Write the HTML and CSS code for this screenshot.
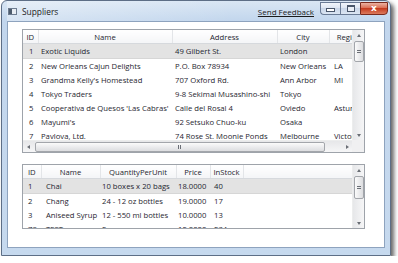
FILE: index.html
```html
<!DOCTYPE html>
<html lang="en">
<head>
    <meta charset="UTF-8">
    <title>Suppliers</title>
    <link rel="stylesheet" href="styles.css">
</head>
<body>
    <div class="window">
        <div class="titlebar">
            <span class="app-icon"><span></span></span>
            <span class="title">Suppliers</span>
            <a class="feedback">Send Feedback</a>
            <div class="caption-buttons">
                <span class="cap-btn min"><span class="glyph-min"></span></span>
                <span class="cap-btn max"><span class="glyph-max"></span></span>
                <span class="cap-btn close">x</span>
            </div>
        </div>

        <div class="client">
            <!-- suppliers grid -->
            <div class="grid grid-top">
                <div class="grid-data">
                    <table class="sup">
                        <colgroup>
                            <col class="c-id"><col class="c-name"><col class="c-addr"><col class="c-city"><col class="c-region">
                        </colgroup>
                        <tr class="head"><th>ID</th><th>Name</th><th>Address</th><th>City</th><th>Region</th></tr>
                        <tr class="selected"><td>1</td><td>Exotic Liquids</td><td>49 Gilbert St.</td><td>London</td><td></td></tr>
                        <tr><td>2</td><td>New Orleans Cajun Delights</td><td>P.O. Box 78934</td><td>New Orleans</td><td>LA</td></tr>
                        <tr><td>3</td><td>Grandma Kelly's Homestead</td><td>707 Oxford Rd.</td><td>Ann Arbor</td><td>MI</td></tr>
                        <tr><td>4</td><td>Tokyo Traders</td><td>9-8 Sekimai Musashino-shi</td><td>Tokyo</td><td></td></tr>
                        <tr><td>5</td><td>Cooperativa de Quesos 'Las Cabras'</td><td>Calle del Rosal 4</td><td>Oviedo</td><td>Asturias</td></tr>
                        <tr><td>6</td><td>Mayumi's</td><td>92 Setsuko Chuo-ku</td><td>Osaka</td><td></td></tr>
                        <tr><td>7</td><td>Pavlova, Ltd.</td><td>74 Rose St. Moonie Ponds</td><td>Melbourne</td><td>Victoria</td></tr>
                    </table>
                </div>
                <div class="vscroll">
                    <span class="btn"><span class="tri up"></span></span>
                    <span class="thumb v-thumb-top"><span class="grip"></span></span>
                    <span class="spacer"></span>
                    <span class="btn"><span class="tri down"></span></span>
                </div>
                <div class="hscroll">
                    <span class="btn"><span class="tri left"></span></span>
                    <span class="thumb h-thumb"><span class="grip"></span></span>
                    <span class="btn"><span class="tri right"></span></span>
                </div>
                <div class="corner"></div>
            </div>

            <!-- products grid -->
            <div class="grid grid-bottom">
                <div class="grid-data">
                    <table class="prod">
                        <colgroup>
                            <col class="p-id"><col class="p-name"><col class="p-qty"><col class="p-price"><col class="p-stock"><col>
                        </colgroup>
                        <tr class="head"><th>ID</th><th>Name</th><th>QuantityPerUnit</th><th>Price</th><th>InStock</th><th class="filler"></th></tr>
                        <tr class="selected"><td>1</td><td>Chai</td><td>10 boxes x 20 bags</td><td>18.0000</td><td>40</td><td></td></tr>
                        <tr><td>2</td><td>Chang</td><td>24 - 12 oz bottles</td><td>19.0000</td><td>17</td><td></td></tr>
                        <tr><td>3</td><td>Aniseed Syrup</td><td>12 - 550 ml bottles</td><td>10.0000</td><td>13</td><td></td></tr>
                        <tr><td>78</td><td>TEST</td><td>2</td><td>12.0000</td><td>234</td><td></td></tr>
                    </table>
                </div>
                <div class="vscroll">
                    <span class="btn"><span class="tri up"></span></span>
                    <span class="thumb v-thumb-bottom"><span class="grip"></span></span>
                    <span class="spacer"></span>
                    <span class="btn"><span class="tri down"></span></span>
                </div>
            </div>
        </div>
    </div>
</body>
</html>
```

FILE: styles.css
```css
body {
    margin: 0;
    background: #fff;
    font-family: "Open Sans", "Liberation Sans", sans-serif;
    color: #222;
}
.window {
    margin-left: 1px;
    width: 390px;
    height: 256px;
    box-sizing: border-box;
    border: 1px solid #5d6e86;
    border-radius: 6px 6px 0 0;
    background: linear-gradient(#d9e6f4, #c2d6ed 20px, #c6d9ee);
    box-shadow: 3px 3px 4px rgba(0, 0, 0, 0.6);
    padding: 0 5px 7px 5px;
    display: flex;
    flex-direction: column;
}
.titlebar {
    height: 20px;
    display: flex;
    align-items: center;
    background: linear-gradient(to right, rgba(255,255,255,0.35), rgba(255,255,255,0) 60%);
}
.app-icon {
    width: 7px;
    height: 5px;
    border: 1px solid #6d7c90;
    background: #e8edf3;
    margin: 1px 5px 0 1px;
    display: flex;
}
.app-icon span {
    width: 3px;
    background: #4d5b6c;
}
.title {
    font-size: 8.4px;
    color: #1b1b1b;
    flex: 1;
}
.feedback {
    font-size: 8px;
    color: #1b1b1b;
    text-decoration: underline;
    margin-right: 6px;
}
.caption-buttons {
    align-self: flex-start;
    margin-top: 1px;
    margin-right: -3px;
    display: flex;
}
.cap-btn {
    height: 13px;
    box-sizing: border-box;
    border: 1px solid #6a7b95;
    display: flex;
    align-items: center;
    justify-content: center;
}
.min, .max {
    width: 20px;
    background: linear-gradient(#f1f5fb, #dbe4f1 50%, #c9d6e8 50%, #dce6f3);
}
.min {
    border-radius: 0 0 0 4px;
    border-right: none;
}
.max {
    border-right: none;
}
.glyph-min {
    width: 7px;
    height: 2px;
    background: #fff;
    border: 1px solid #49566a;
    margin-top: 3px;
}
.glyph-max {
    width: 6px;
    height: 4px;
    border: 1px solid #49566a;
    border-top-width: 2px;
    background: #e9eef5;
}
.close {
    width: 28px;
    border-radius: 0 0 4px 0;
    border-color: #7a2a1d;
    background: linear-gradient(#eab2a2, #d9664b 50%, #c53c20 50%, #dc7a5c);
    color: #fff;
    font-family: "DejaVu Sans", sans-serif;
    font-size: 9px;
    font-weight: bold;
    line-height: 1;
}
.client {
    flex: 1;
    background: #fff;
    border: 1px solid #8ea3be;
    padding: 7px 19px 18px 14px;
    display: flex;
    flex-direction: column;
    gap: 11px;
    min-height: 0;
}
.grid {
    border: 1px solid #9ea3aa;
    display: grid;
    grid-template-columns: 1fr 12px;
    overflow: hidden;
}
.grid-top {
    height: 124px;
    box-sizing: border-box;
    grid-template-rows: 1fr 12px;
}
.grid-bottom {
    flex: 1;
    min-height: 0;
    grid-template-rows: 1fr;
}
.grid-data {
    overflow: hidden;
    min-width: 0;
    min-height: 0;
}
table {
    border-collapse: collapse;
    table-layout: fixed;
    font-size: 7.7px;
    white-space: nowrap;
    color: #1f2630;
}
.sup { width: 346px; }
.prod { width: 329px; }
.c-id { width: 15px; }
.c-name { width: 134px; }
.c-addr { width: 105px; }
.c-city { width: 52px; }
.c-region { width: 40px; }
.p-id { width: 18px; }
.p-name { width: 59px; }
.p-qty { width: 76px; }
.p-price { width: 34px; }
.p-stock { width: 33px; }
th, td {
    overflow: hidden;
    padding: 0 0 0 3px;
}
th {
    height: 13px;
    font-weight: normal;
    text-align: center;
    padding: 0;
    background: linear-gradient(#fff, #f4f5f7);
    border-right: 1px solid #e3e5e8;
    border-bottom: 1px solid #d6d9dd;
}
th.filler {
    border-right: none;
}
td {
    height: 14px;
}
tr td:first-child {
    padding-left: 6px;
}
.prod td:first-child {
    padding-left: 5px;
}
.prod td:nth-child(2) {
    padding-left: 5px;
}
.prod td:nth-child(3) {
    padding-left: 2px;
}
.prod td:nth-child(4) {
    padding-left: 2px;
}
.prod td:nth-child(5) {
    padding-left: 4px;
}
.sup td:nth-child(5) {
    padding-left: 5px;
}
tr.selected td {
    background: #e3e3e3;
    border-top: 1px solid #d6d6d6;
    border-bottom: 1px solid #d6d6d6;
}
.vscroll {
    background: linear-gradient(to right, #e6e7e9, #f6f6f7);
    border-left: 1px solid #eceded;
    display: flex;
    flex-direction: column;
    align-items: center;
    overflow: hidden;
}
.hscroll {
    background: linear-gradient(#e6e7e9, #f6f6f7);
    border-top: 1px solid #eceded;
    display: flex;
    align-items: center;
    overflow: hidden;
}
.btn {
    width: 10px;
    height: 10px;
    flex-shrink: 0;
    display: flex;
    align-items: center;
    justify-content: center;
}
.tri {
    width: 0;
    height: 0;
    border: 2px solid transparent;
}
.tri.up {
    border-bottom: 3px solid #6a6e75;
    border-top-width: 0;
}
.tri.down {
    border-top: 3px solid #6a6e75;
    border-bottom-width: 0;
}
.tri.left {
    border-right: 3px solid #6a6e75;
    border-left-width: 0;
}
.tri.right {
    border-left: 3px solid #6a6e75;
    border-right-width: 0;
}
.spacer {
    flex: 1;
}
.thumb {
    box-sizing: border-box;
    border: 1px solid #a3a6ab;
    border-radius: 2px;
    background: linear-gradient(to right, #fbfbfb, #dcdde0);
    display: flex;
    align-items: center;
    justify-content: center;
    flex-shrink: 0;
}
.v-thumb-top {
    width: 10px;
    height: 21px;
    margin-top: 1px;
}
.v-thumb-bottom {
    width: 10px;
    height: 23px;
    margin-top: 1px;
}
.h-thumb {
    height: 10px;
    width: 290px;
    margin-left: 2px;
    margin-right: 17px;
    background: linear-gradient(#fbfbfb, #dcdde0);
}
.grip {
    width: 4px;
    height: 4px;
    background: repeating-linear-gradient(#6b6f76 0 1px, transparent 1px 2px);
}
.h-thumb .grip {
    background: repeating-linear-gradient(to right, #6b6f76 0 1px, transparent 1px 2px);
}
.corner {
    background: #f0f0f1;
}
```
